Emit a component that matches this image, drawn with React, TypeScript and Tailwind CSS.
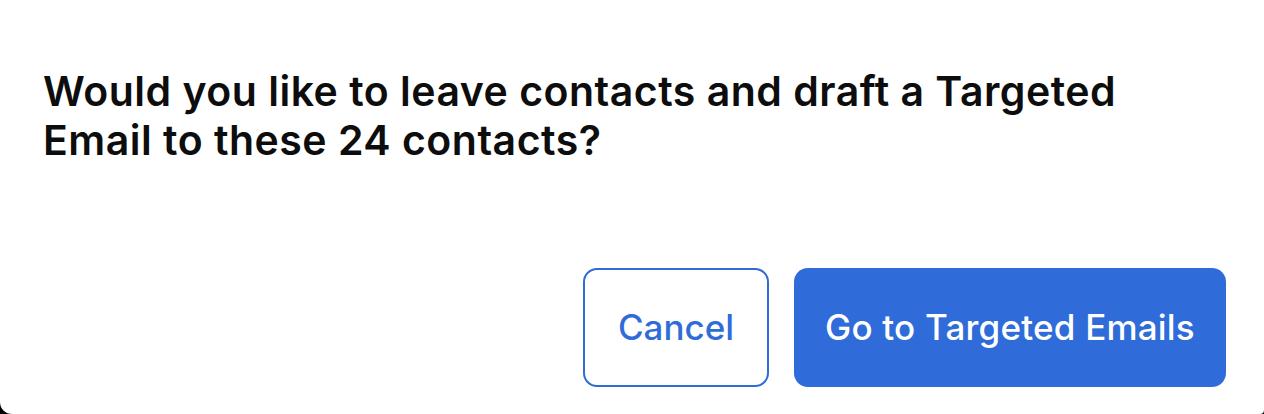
export default function App() {
  return (
    <div className="h-[414px] w-full bg-black" style={{ fontFamily: 'Inter, "Liberation Sans", sans-serif' }}>
      <div className="flex h-full w-full flex-col rounded-bl-[12px] rounded-br-[4px] bg-white pl-[43px] pr-[38px] pt-[67px]">
        {/* Confirmation text */}
        <h2 className="max-w-[1160px] text-[41px] font-semibold leading-[49px] tracking-[0.5px] text-[#0d0d0d]">
          Would you like to leave contacts and draft a Targeted Email to these 24 contacts?
        </h2>

        {/* Actions */}
        <div className="mt-[103px] flex justify-end gap-[25px]">
          <button className="flex h-[119px] w-[186px] items-center justify-center rounded-[14px] border-2 border-[#2f6cd9] bg-white text-[35px] font-medium text-[#2f6cd9]">
            Cancel
          </button>
          <button className="flex h-[119px] w-[432px] items-center justify-center rounded-[14px] bg-[#2f6cd9] text-[35px] font-medium tracking-[0.2px] text-white">
            Go to Targeted Emails
          </button>
        </div>
      </div>
    </div>
  );
}
